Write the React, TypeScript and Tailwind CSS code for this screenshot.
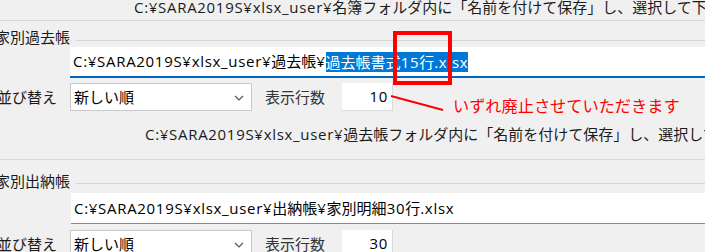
import React from 'react';

const FONT = "font-['Open_Sans','Noto_Sans_CJK_JP',sans-serif]";

// latin runs are a bit wider in the original UI font
const L = ({ children }: { children: React.ReactNode }) => (
  <span className="tracking-[0.7px]">{children}</span>
);

const GroupHeader = ({ title, pad, lineTop }: { title: string; pad: string; lineTop: string }) => (
  <div className={`flex ${pad}`}>
    <span className="ml-[-5px] leading-[20px] whitespace-nowrap text-[#1b1b1b]">{title}</span>
    <div className={`flex-1 h-px bg-[#d6d6d6] ml-[6px] ${lineTop}`} />
  </div>
);

const SortRow = ({ rows }: { rows: string }) => (
  <div className="flex items-center h-[28px]">
    <span className="w-[70px] ml-[-3px] mr-[3px] whitespace-nowrap text-[#1b1b1b]">並び替え</span>
    <div className="w-[182px] h-[28px] bg-white border border-[#c9c9c9] flex items-center justify-between pl-[3px] pr-[7px]">
      <span className="leading-[20px]">新しい順</span>
      <svg width="10" height="6" viewBox="0 0 10 6" className="mt-[1px]">
        <path d="M1 1 L5 5 L9 1" fill="none" stroke="#555" strokeWidth="1.2" />
      </svg>
    </div>
    <span className="ml-[13px] w-[77px] whitespace-nowrap text-[#333]">表示行数</span>
    <div className="w-[51px] h-[28px] bg-white border-r border-b border-[#dadada] flex items-center justify-end pr-[4px]">
      <L>{rows}</L>
    </div>
  </div>
);

export default function App() {
  return (
    <div className={`relative w-[705px] h-[252px] overflow-hidden bg-[#f0f0f0] text-[15px] text-black ${FONT}`}>
      <div className="h-[21px] border-b border-[#d9d9d9] pl-[134px] leading-[14px] whitespace-nowrap overflow-hidden text-[#1b1b1b]">
        <L>C:¥SARA2019S¥xlsx_user¥</L>名簿フォルダ内に「名前を付けて保存」し、選択して下さい
      </div>

      <GroupHeader title="家別過去帳" pad="pt-[6px] h-[26px]" lineTop="mt-[13px]" />

      <div className="ml-[70px] h-[31px] bg-white border-b-2 border-[#0067c0] flex items-center pl-[3px] whitespace-nowrap">
        <span>
          <L>C:¥SARA2019S¥xlsx_user¥</L>過去帳<L>¥</L>
        </span>
        <span className="bg-[#0078d7] text-white leading-[20px]">
          過去帳書式<L>15</L>行<L>.xlsx</L>
        </span>
      </div>

      <div className="mt-[5px]">
        <SortRow rows="10" />
      </div>

      <div className="h-[49px] border-b border-[#d9d9d9] pl-[145px] pt-[13px] leading-[20px] whitespace-nowrap overflow-hidden text-[#1b1b1b]">
        <L>C:¥SARA2019S¥xlsx_user¥</L>過去帳フォルダ内に「名前を付けて保存」し、選択して下さい
      </div>

      <GroupHeader title="家別出納帳" pad="pt-[11px] h-[33px]" lineTop="mt-[12px]" />

      <div className="ml-[71px] h-[31px] bg-white border-b border-[#8c8c8c] flex items-center pl-[3px] whitespace-nowrap">
        <L>C:¥SARA2019S¥xlsx_user¥</L>出納帳<L>¥</L>家別明細<L>30</L>行<L>.xlsx</L>
      </div>

      <div className="mt-[6px]">
        <SortRow rows="30" />
      </div>

      {/* annotation */}
      <div className="absolute left-[393px] top-[31px] w-[59px] h-[54px] border-4 border-[#ff0000]" />
      <svg className="absolute left-[388px] top-[93px]" width="60" height="20" viewBox="0 0 60 20">
        <line x1="3" y1="3" x2="55" y2="17" stroke="#ff0000" strokeWidth="2" />
      </svg>
      <div className="absolute left-[453px] top-[95px] text-[16.2px] leading-[22px] text-[#ff0000] whitespace-nowrap">
        いずれ廃止させていただきます
      </div>
    </div>
  );
}
